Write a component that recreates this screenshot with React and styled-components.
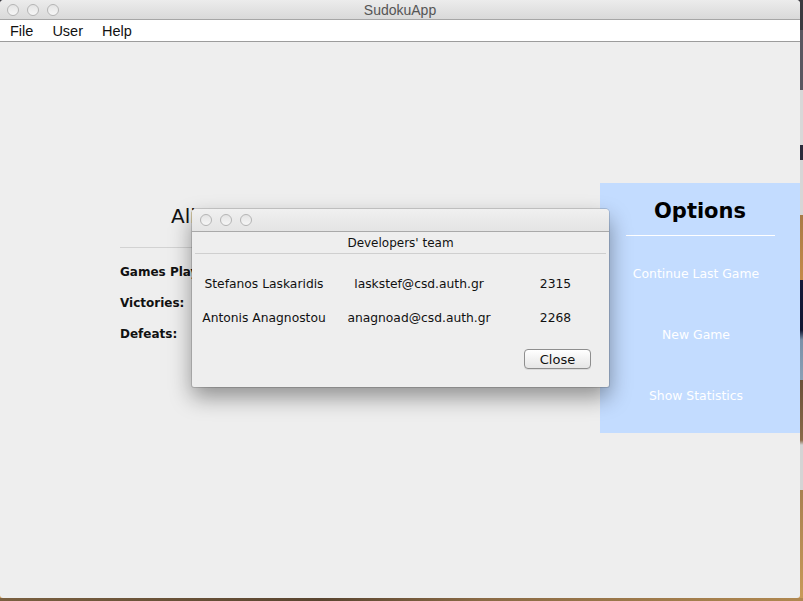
import * as React from 'react';
import styled, { createGlobalStyle } from 'styled-components';

const GlobalStyle = createGlobalStyle`
  html, body {
    margin: 0;
    padding: 0;
    width: 803px;
    height: 601px;
    overflow: hidden;
  }
  body {
    font-family: "DejaVu Sans", "Liberation Sans", sans-serif;
    background:
      linear-gradient(to right, #7a6040, #5a4530 40%, #8a6a45 60%, #b08850) bottom / 100% 3px no-repeat,
      linear-gradient(to bottom,
        #3b3a40 0px, #3b3a40 30px,
        #5a5660 30px, #5a5660 90px,
        #d8d8d8 90px, #d8d8d8 145px,
        #2a2a3a 145px, #2a2a3a 160px,
        #d6d6d6 160px, #d6d6d6 215px,
        #a87a45 215px, #c48a4a 280px,
        #141838 280px, #101530 330px,
        #7a90a8 340px, #8aa0b5 380px,
        #6a5038 380px, #8a6a48 440px,
        #d4d4d4 445px, #d4d4d4 490px,
        #a88050 490px, #c89a58 601px);
  }
`;

const Window = styled.div`
  width: 800px;
  height: 598px;
  background: #eeeeee;
  border-radius: 4px 4px 3px 3px;
  display: flex;
  flex-direction: column;
  position: relative;
  overflow: hidden;
`;

const TitleBar = styled.div`
  height: 20px;
  flex: none;
  background: linear-gradient(to bottom, #ececec, #d9d9d9);
  border-bottom: 1px solid #a6a6a6;
  box-sizing: border-box;
  display: flex;
  align-items: center;
  position: relative;
  padding-left: 7px;
`;

const Lights = styled.div`
  display: flex;
  gap: 8px;
`;

const Light = styled.span`
  width: 12px;
  height: 12px;
  border-radius: 50%;
  box-sizing: border-box;
  border: 1px solid #b4b4b4;
  background: linear-gradient(to bottom, #e4e4e4, #f6f6f6);
`;

const WindowTitle = styled.div`
  position: absolute;
  left: 0;
  right: 0;
  text-align: center;
  font-family: "Liberation Sans", sans-serif;
  font-size: 14px;
  color: #555555;
  pointer-events: none;
`;

const MenuBar = styled.div`
  height: 22px;
  flex: none;
  background: #ffffff;
  border-bottom: 1px solid #9c9c9c;
  box-sizing: border-box;
  display: flex;
  align-items: center;
  padding-left: 10px;
`;

const MenuItem = styled.span`
  font-family: "Liberation Sans", sans-serif;
  font-size: 14.5px;
  color: #111;
  margin-right: ${p => p.gap}px;
`;

const Content = styled.div`
  flex: 1;
  display: flex;
  justify-content: space-between;
  align-items: flex-start;
`;

const StatsPanel = styled.div`
  margin-left: 120px;
  margin-top: 162px;
  width: 300px;
  display: flex;
  flex-direction: column;
`;

const UserName = styled.div`
  font-size: 20px;
  color: #111;
  padding-left: 51px;
  line-height: 24px;
  padding-bottom: 19px;
  border-bottom: 1px solid #d2d2d2;
`;

const StatLabel = styled.div`
  font-size: 12px;
  font-weight: bold;
  color: #111;
  line-height: 16px;
  margin-top: ${p => p.top}px;
`;

const Options = styled.div`
  margin-top: 141px;
  width: 200px;
  height: 250px;
  background: #c3dcff;
  display: flex;
  flex-direction: column;
  align-items: center;
`;

const OptionsTitle = styled.div`
  font-size: 21px;
  font-weight: bold;
  color: #000;
  margin-top: 15px;
  line-height: 26px;
  width: 149px;
  text-align: center;
  padding-bottom: 11px;
  border-bottom: 1px solid #ffffff;
`;

const OptionItem = styled.div`
  font-size: 12.4px;
  color: #ffffff;
  margin-top: ${p => p.top}px;
  margin-right: 8px;
  line-height: 16px;
`;

const Dialog = styled.div`
  position: absolute;
  left: 192px;
  top: 209px;
  width: 417px;
  height: 178px;
  background: #eeeeee;
  border-radius: 4px 4px 2px 2px;
  box-shadow: 0 10px 22px rgba(0, 0, 0, 0.4), 0 0 0 1px rgba(0, 0, 0, 0.14);
  display: flex;
  flex-direction: column;
  overflow: hidden;
`;

const DialogBar = styled.div`
  height: 23px;
  flex: none;
  background: linear-gradient(to bottom, #f0f0f0, #e4e4e4);
  border-bottom: 1px solid #a9a9a9;
  box-sizing: border-box;
  display: flex;
  align-items: center;
  padding-left: 8px;
`;

const DialogHeading = styled.div`
  margin: 0 3px;
  height: 21px;
  border-bottom: 1px solid #cfcfcf;
  display: flex;
  align-items: center;
  justify-content: center;
  font-size: 12px;
  color: #111;
`;

const Team = styled.div`
  display: grid;
  grid-template-columns: 144px 166px 107px;
  row-gap: 18px;
  margin-top: 22px;
`;

const Cell = styled.div`
  font-size: 12.3px;
  color: #111;
  text-align: center;
  line-height: 16px;
`;

const Actions = styled.div`
  display: flex;
  justify-content: flex-end;
  padding-right: 18px;
  margin-top: 23px;
`;

const Button = styled.button`
  width: 67px;
  height: 20px;
  border: 1px solid #8e8e8e;
  border-radius: 4px;
  background: linear-gradient(to bottom, #ffffff, #f2f2f2 50%, #e6e6e6);
  font-family: "DejaVu Sans", sans-serif;
  font-size: 13px;
  color: #111;
  padding: 0;
  box-shadow: 0 1px 0 rgba(0, 0, 0, 0.08);
`;

const team = [
  ['Stefanos Laskaridis', 'laskstef@csd.auth.gr', '2315'],
  ['Antonis Anagnostou', 'anagnoad@csd.auth.gr', '2268'],
];

export default function App() {
  return (
    <>
      <GlobalStyle />
      <Window>
        <TitleBar>
          <Lights>
            <Light />
            <Light />
            <Light />
          </Lights>
          <WindowTitle>SudokuApp</WindowTitle>
        </TitleBar>
        <MenuBar>
          <MenuItem gap={19}>File</MenuItem>
          <MenuItem gap={19}>User</MenuItem>
          <MenuItem gap={0}>Help</MenuItem>
        </MenuBar>
        <Content>
          <StatsPanel>
            <UserName>Alias Stats</UserName>
            <StatLabel top={16}>Games Played:</StatLabel>
            <StatLabel top={15}>Victories:</StatLabel>
            <StatLabel top={15}>Defeats:</StatLabel>
          </StatsPanel>
          <Options>
            <OptionsTitle>Options</OptionsTitle>
            <OptionItem top={30}>Continue Last Game</OptionItem>
            <OptionItem top={45}>New Game</OptionItem>
            <OptionItem top={45}>Show Statistics</OptionItem>
          </Options>
        </Content>
        <Dialog>
          <DialogBar>
            <Lights>
              <Light />
              <Light />
              <Light />
            </Lights>
          </DialogBar>
          <DialogHeading>Developers' team</DialogHeading>
          <Team>
            {team.map(row =>
              row.map((v, i) => <Cell key={row[0] + i}>{v}</Cell>)
            )}
          </Team>
          <Actions>
            <Button>Close</Button>
          </Actions>
        </Dialog>
      </Window>
    </>
  );
}
